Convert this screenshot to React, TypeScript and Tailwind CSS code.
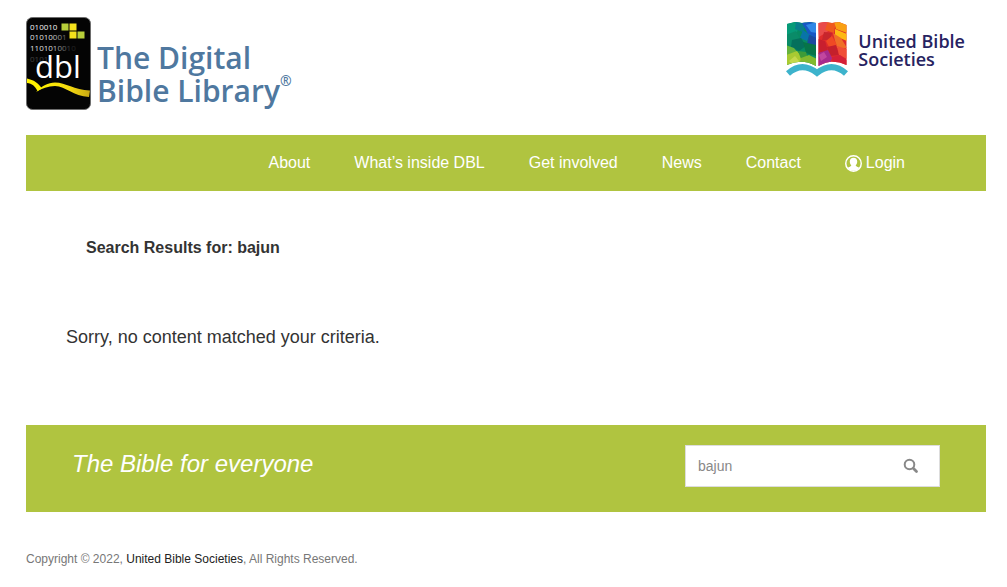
import React, { useState } from "react";

const links = ["About", "What’s inside DBL", "Get involved", "News", "Contact"];

function DblMark() {
  return (
    <svg width="65" height="93" viewBox="0 0 65 93" aria-hidden="true">
      <defs>
        <linearGradient id="page" x1="0" y1="0" x2="1" y2="0">
          <stop offset="0" stopColor="#fff200" />
          <stop offset="0.6" stopColor="#f6dc10" />
          <stop offset="1" stopColor="#c9a812" />
        </linearGradient>
        <linearGradient id="digits" x1="4" y1="0" x2="50" y2="0" gradientUnits="userSpaceOnUse">
          <stop offset="0.45" stopColor="#ececec" />
          <stop offset="0.9" stopColor="#222222" />
        </linearGradient>
      </defs>
      <rect x="0.5" y="0.5" width="64" height="92" rx="6" fill="#040404" stroke="#6d6d6d" />
      <g fontFamily="'Open Sans', sans-serif" fontSize="8" fontWeight="500" fill="url(#digits)">
        <text x="4" y="12.5" fill="#f4f4f4">010010</text>
        <text x="4" y="23">01010001</text>
        <text x="4" y="34">1101010010</text>
        <text x="4" y="45" opacity="0.25">0101</text>
      </g>
      <rect x="35.500" y="6.500" width="7" height="7" fill="#b8cf3a" />
      <rect x="43.500" y="6.500" width="7" height="7" fill="#f4e11c" />
      <rect x="43.500" y="14.500" width="7" height="7" fill="#f4e11c" />
      <rect x="51.500" y="14.500" width="7" height="7" fill="#b8cf3a" />
      <path d="M1 61.500C8 63 12 66 16 71.500L11.500 74C9 69 6 66.500 1 66Z" fill="#fff200" />
      <path
        d="M10 75C16 69 22 65.500 29 65.500C40 65.500 48 73 64 73.500L63 80C47 79 40 69.500 29 69C22 69 16 71.500 10 75Z"
        fill="url(#page)"
      />
      <text x="9" y="60.500" fontFamily="'Open Sans', sans-serif" fontSize="31" fill="#ffffff">
        dbl
      </text>
    </svg>
  );
}

function UbsMark() {
  return (
    <svg width="62" height="58" viewBox="0 0 62 58" aria-hidden="true">
      <defs>
        <clipPath id="pages">
          <path d="M1 3L9 1L16 2L24 1L30 2V45Q16 37 1 44Z" />
          <path d="M32.500 2L39 1L46 2L53 1L60.500 4V44Q46 37 32.500 45Z" />
        </clipPath>
      </defs>
      <g clipPath="url(#pages)">
        <path d="M0 0H31V48H0Z" fill="#078a62" />
        <path d="M0 0H15L11 11L0 15Z" fill="#069b78" />
        <path d="M10 0H20L17 11L9 8Z" fill="#087e8c" />
        <path d="M15 0H31V18L22 13Z" fill="#1757c4" />
        <path d="M20 4L31 1V12L25 11Z" fill="#2f87e6" />
        <path d="M17 9L24 14L21 20L14 17Z" fill="#0874a8" />
        <path d="M23 14L31 17V26L21 23Z" fill="#1a4aa0" />
        <path d="M0 14L10 10L14 18L6 25L0 22Z" fill="#0a8b68" />
        <path d="M6 19L15 17L20 25L13 30L5 26Z" fill="#05705c" />
        <path d="M17 21L30 24V35L20 32Z" fill="#077448" />
        <path d="M0 24L8 27L12 32L0 37Z" fill="#67b33c" />
        <path d="M0 34L11 30L17 37L9 48H0Z" fill="#a8ca32" />
        <path d="M12 30L20 31L22 38L15 38Z" fill="#3d9b38" />
        <path d="M15 37L23 34L31 38V48H12Z" fill="#82b92f" />
        <path d="M3 40L9 35L13 40L8 45Z" fill="#c5d94c" />
        <path d="M32 0H61V48H32Z" fill="#df2b2b" />
        <path d="M31 0H42L44 9L33 16Z" fill="#e94a4a" />
        <path d="M42 0H50L48 12L39 9Z" fill="#ef5a1e" />
        <path d="M48 0H61V12L50 8Z" fill="#f9a013" />
        <path d="M49 8L61 13V20L49 15Z" fill="#fdb913" />
        <path d="M47 12L55 17L61 27H51Z" fill="#ef7027" />
        <path d="M38 11L46 12L44 19L36 19Z" fill="#c7252c" />
        <path d="M46 15L51 24L43 26L40 20Z" fill="#f04a24" />
        <path d="M32 18L39 20L42 30L32 33Z" fill="#c81f2e" />
        <path d="M41 26L50 24L53 34L44 35Z" fill="#c4202c" />
        <path d="M51 25L61 28V38L53 34Z" fill="#f04e37" />
        <path d="M32 32L42 29L46 37L42 48H32Z" fill="#a62b8d" />
        <path d="M33 34L38 31L41 36L35 40Z" fill="#c2479f" />
        <path d="M46 36L54 34L61 39V48H47Z" fill="#d42038" />
      </g>
      <path
        d="M2 52.500Q16 40 31 52Q46 40 60 52.500"
        fill="none"
        stroke="#3db3cc"
        strokeWidth="6"
      />
    </svg>
  );
}

function UserIcon() {
  return (
    <svg width="17" height="17" viewBox="0 0 16 16" aria-hidden="true">
      <circle cx="8" cy="8" r="7.300" fill="none" stroke="#ffffff" strokeWidth="1.400" />
      <path
        d="M8 2.500C10.300 2.500 11.600 4.200 11.500 6.300C11.400 7.900 10.700 9 10 9.800C10.200 10.700 12.300 11 13.700 12.300A7.500 7.500 0 0 1 2.300 12.300C3.700 11 5.800 10.700 6 9.800C5.300 9 4.600 7.900 4.500 6.300C4.400 4.200 5.700 2.500 8 2.500Z"
        fill="#ffffff"
      />
    </svg>
  );
}

export default function App() {
  const [query, setQuery] = useState("bajun");

  return (
    <div className="pl-[26px] pr-[21px] bg-white text-[#333333] font-['Liberation_Sans',Arial,sans-serif]">
      <header className="flex items-start justify-between pt-[17px] pb-[25px]">
        <a href="#" className="flex items-start text-[#4f789f]">
          <DblMark />
          <span className="pt-6 pl-1.5 font-['Open_Sans',sans-serif] font-semibold text-[30px] leading-[33px]">
            The Digital
            <br />
            Bible Library
            <sup className="text-sm leading-none -top-4">®</sup>
          </span>
        </a>
        <a href="#" className="flex items-start pt-1 pr-[21px] text-[#272361]">
          <UbsMark />
          <span className="pt-[11px] pl-2.5 font-['Open_Sans',sans-serif] font-semibold text-lg leading-[18px]">
            United Bible
            <br />
            Societies
          </span>
        </a>
      </header>

      <nav className="flex justify-end gap-11 bg-[#b0c440] pr-[81px] py-4 text-base text-white">
        {links.map((link) => (
          <a key={link} href="#">
            {link}
          </a>
        ))}
        <a href="#" className="flex items-center gap-1">
          <UserIcon />
          Login
        </a>
      </nav>

      <main className="px-10 pt-[45px] pb-[74px]">
        <h1 className="pl-5 text-base font-bold">Search Results for: bajun</h1>
        <p className="pt-[63px] text-lg">Sorry, no content matched your criteria.</p>
      </main>

      <section className="flex items-start justify-between bg-[#b0c440] px-[46px] pt-5 pb-[25px]">
        <h2 className="pt-[3px] text-2xl italic text-white">The Bible for everyone</h2>
        <form
          className="flex items-center w-[255px] h-[42px] border border-[#dddddd] bg-white"
          onSubmit={(e) => e.preventDefault()}
        >
          <input
            className="flex-1 min-w-0 pl-3 text-sm text-[#888888] focus:outline-none"
            type="text"
            aria-label="Search"
            value={query}
            onChange={(e) => {
              setQuery(e.target.value);
            }}
          />
          <button type="submit" aria-label="Submit search" className="pr-5">
            <svg width="16" height="16" viewBox="0 0 16 16" fill="none" stroke="#888888">
              <circle cx="6.500" cy="6.500" r="4.800" strokeWidth="2" />
              <path d="M10.500 10.500L13.500 13.500" strokeWidth="2.800" strokeLinecap="round" />
            </svg>
          </button>
        </form>
      </section>

      <footer className="py-[39px] text-xs text-[#777777]">
        Copyright © 2022,{" "}
        <a href="#" className="text-[#222222]">
          United Bible Societies
        </a>
        , All Rights Reserved.
      </footer>
    </div>
  );
}
